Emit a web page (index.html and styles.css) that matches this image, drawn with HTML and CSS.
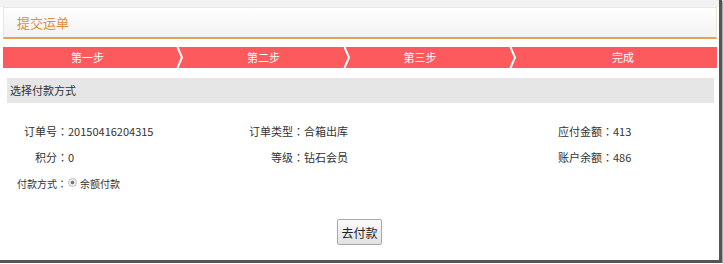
FILE: index.html
```html
<!DOCTYPE html>
<html lang="zh-CN">
<head>
<meta charset="utf-8">
<title>提交运单</title>
<link rel="stylesheet" href="styles.css">
</head>
<body>
<div class="window">
<div class="frame">
  <div class="header"><span class="title">提交运单</span></div>
  <div class="steps">
    <div class="step step1">第一步<svg class="chev" width="8" height="21" viewBox="0 0 8 21"><polyline points="1.5,0 6,10.5 1.5,21" fill="none" stroke="#fff" stroke-width="2"/></svg></div>
    <div class="step step2">第二步<svg class="chev" width="8" height="21" viewBox="0 0 8 21"><polyline points="1.5,0 6,10.5 1.5,21" fill="none" stroke="#fff" stroke-width="2"/></svg></div>
    <div class="step step3">第三步<svg class="chev" width="8" height="21" viewBox="0 0 8 21"><polyline points="1.5,0 6,10.5 1.5,21" fill="none" stroke="#fff" stroke-width="2"/></svg></div>
    <div class="step step4">完成</div>
  </div>
  <div class="section">选择付款方式</div>
  <div class="info">
    <span class="lbl">订单号<span class="colon" lang="zh-TW">：</span></span><span class="val">20150416204315</span>
    <span class="lbl">订单类型<span class="colon" lang="zh-TW">：</span></span><span class="val">合箱出库</span>
    <span class="lbl">应付金额<span class="colon" lang="zh-TW">：</span></span><span class="val">413</span>
    <span class="lbl">积分<span class="colon" lang="zh-TW">：</span></span><span class="val">0</span>
    <span class="lbl">等级<span class="colon" lang="zh-TW">：</span></span><span class="val">钻石会员</span>
    <span class="lbl">账户余额<span class="colon" lang="zh-TW">：</span></span><span class="val">486</span>
  </div>
  <div class="pay">
    <span class="pay-lbl">付款方式<span class="colon" lang="zh-TW">：</span></span>
    <label class="opt"><input type="radio" class="radio" name="pay" checked><span>余额付款</span></label>
  </div>
  <div class="actions"><button class="btn" type="button">去付款</button></div>
</div>
</div>
</body>
</html>
```
FILE: styles.css
```css
html, body {
  margin: 0;
  padding: 0;
  background: #fff;
}
body {
  font-family: "Noto Sans CJK SC", "Microsoft YaHei", sans-serif;
  font-size: 11px;
  color: #333;
}
.window {
  width: 719px;
  height: 260px;
  border-right: 3px solid #555;
  border-bottom: 3px solid #555;
  box-shadow: 1px 1px 0 #aaa;
}
.frame {
  height: 253px;
  padding-top: 7px;
  background: linear-gradient(#f2f2f2 0, #f2f2f2 7px, #fff 7px);
  overflow: hidden;
}
.header {
  margin: 0 2px 0 3px;
  height: 29px;
  border: 1px solid #efe6d6;
  border-bottom: 2px solid #e5a05a;
  background: linear-gradient(#ffffff, #f2f2f2);
  display: flex;
  align-items: center;
  padding-left: 13px;
}
.title {
  color: #e28d38;
  font-size: 13px;
}
.steps {
  margin: 8px 2px 0 3px;
  height: 21px;
  display: grid;
  grid-template-columns: 177px 167px 166px 1fr;
  background: #fc5a5c;
}
.step {
  position: relative;
  color: #fff;
  line-height: 21px;
  text-align: center;
  font-size: 11px;
}
.step1 { padding-right: 8px; }
.step3 { padding-right: 20px; }
.step4 { padding-left: 16px; }
.chev {
  position: absolute;
  right: -4px;
  top: 0;
}
.section {
  margin: 10px 5px 0 7px;
  height: 25px;
  line-height: 25px;
  background: #e6e6e6;
  padding-left: 3px;
  font-size: 11px;
}
.info {
  margin-top: 15px;
  display: grid;
  grid-template-columns: 68px 181px 55px 254px 55px 1fr;
  grid-auto-rows: 26px;
  align-items: center;
}
.colon {
  font-family: "Noto Sans CJK TC", sans-serif;
}
.lbl { text-align: right; white-space: nowrap; }
.val { white-space: nowrap; }
.pay {
  height: 26px;
  display: flex;
  align-items: center;
  padding-left: 17px;
  font-size: 10px;
}
.opt {
  display: flex;
  align-items: center;
}
.radio {
  appearance: none;
  -webkit-appearance: none;
  width: 9px;
  height: 9px;
  margin: 0 3px 2px 1px;
  border: 1px solid #bdbdbd;
  border-radius: 50%;
  background: radial-gradient(circle, #777 0, #777 1.6px, #f4f4f4 2.2px, #e8e8e8 100%);
}
.actions {
  margin-top: 23px;
  display: flex;
  justify-content: center;
}
.btn {
  width: 45px;
  height: 26px;
  padding: 0;
  border: 1px solid #a8a8a8;
  border-radius: 2px;
  background: linear-gradient(#fbfbfb, #e2e2e2);
  font-family: "Noto Sans CJK SC", sans-serif;
  font-size: 12px;
  color: #222;
}
```
